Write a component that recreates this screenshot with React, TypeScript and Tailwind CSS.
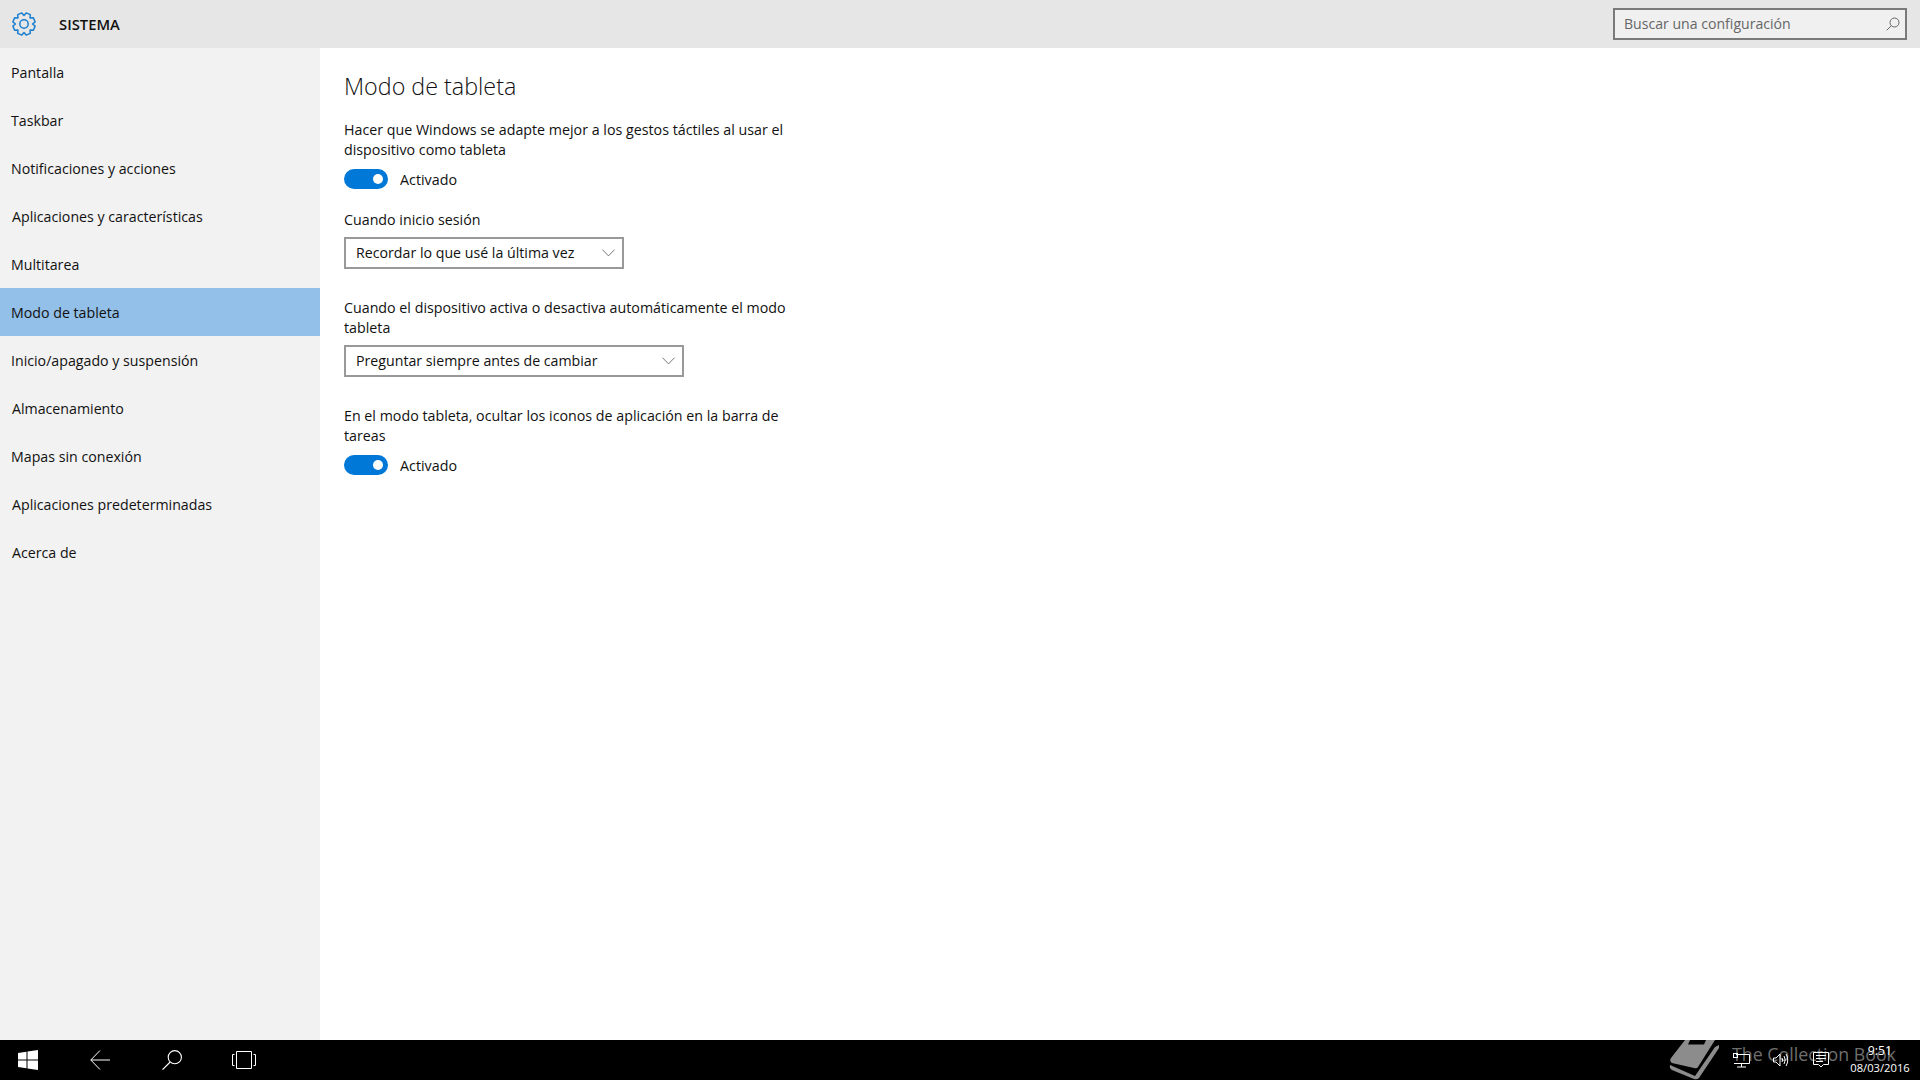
const FONT = "font-['Open_Sans','Noto_Sans',sans-serif]";

const NAV = [
  'Pantalla',
  'Taskbar',
  'Notificaciones y acciones',
  'Aplicaciones y características',
  'Multitarea',
  'Modo de tableta',
  'Inicio/apagado y suspensión',
  'Almacenamiento',
  'Mapas sin conexión',
  'Aplicaciones predeterminadas',
  'Acerca de',
];

// eight blunt teeth round a 24px box
function gearPath() {
  const pts: string[] = [];
  for (let i = 0; i < 8; i++) {
    const a = (i * Math.PI) / 4 + Math.PI / 8;
    const steps: [number, number][] = [
      [8.6, -0.39],
      [11.3, -0.2],
      [11.3, 0.2],
      [8.6, 0.39],
    ];
    for (const [r, d] of steps) {
      pts.push(`${(12 + r * Math.cos(a + d)).toFixed(2)} ${(12 + r * Math.sin(a + d)).toFixed(2)}`);
    }
  }
  return `M${pts.join('L')}Z`;
}

export default function App() {
  return (
    <div className={`flex h-[1080px] w-[1920px] flex-col overflow-hidden bg-white text-[14.2px] leading-5 text-[#111] ${FONT}`}>
      <header className="flex h-12 shrink-0 items-center bg-[#e6e6e6] pl-3 pr-[13px]">
        <svg width="24" height="24" viewBox="0 0 24 24" fill="none" stroke="#1a7fd0" strokeWidth="1.5" strokeLinejoin="round">
          <path d={gearPath()} />
          <circle cx="12" cy="12" r="4.2" />
        </svg>
        <span className="ml-[23px] text-[14.8px] font-semibold">SISTEMA</span>
        <div className="ml-auto flex h-8 w-[294px] items-center justify-between border-2 border-[#7a7a7a] bg-[#f0f0f0] pl-[9px] pr-[5px] text-[14.1px] text-[#666]">
          <span>Buscar una configuración</span>
          <svg width="14" height="14" viewBox="0 0 14 14" fill="none" stroke="#666" strokeWidth="1">
            <circle cx="8.5" cy="5.5" r="4.5" />
            <path d="M5.3 8.7 0.7 13.3" />
          </svg>
        </div>
      </header>

      <div className="flex min-h-0 flex-1">
        <nav className="w-80 shrink-0 bg-[#f2f2f2]">
          {NAV.map((item) => (
            <div
              key={item}
              className={`flex h-12 items-center pt-px ${item.startsWith('A') ? 'pl-3' : 'pl-[11px]'} ${item === 'Modo de tableta' ? 'bg-[#92c0e8]' : ''}`}
            >
              {item}
            </div>
          ))}
        </nav>

        <main className="flex-1 pl-6 pt-[22px]">
          <h1 className="text-[23.3px] font-light leading-8">Modo de tableta</h1>
          <p className="mt-[18px] w-[470px] text-[14.25px]">
            Hacer que Windows se adapte mejor a los gestos táctiles al usar el dispositivo como tableta
          </p>
          <Toggle />
          <p className="mt-[21px] text-[14.25px]">Cuando inicio sesión</p>
          <Combo width="w-[280px]" value="Recordar lo que usé la última vez" />
          <p className="mt-[29px] w-[470px] text-[14.25px]">
            Cuando el dispositivo activa o desactiva automáticamente el modo tableta
          </p>
          <Combo width="w-[340px]" value="Preguntar siempre antes de cambiar" />
          <p className="mt-[29px] w-[470px] text-[14.25px]">
            En el modo tableta, ocultar los iconos de aplicación en la barra de tareas
          </p>
          <Toggle />
        </main>
      </div>

      <Taskbar />
    </div>
  );
}

function Toggle() {
  return (
    <div className="mt-[9px] flex items-center gap-3">
      <div className="flex h-5 w-11 items-center justify-end rounded-full bg-[#0078d7] pr-[5px]">
        <div className="h-2.5 w-2.5 rounded-full bg-white" />
      </div>
      <span className="h-5 text-[14.3px] leading-[22px]">Activado</span>
    </div>
  );
}

function Combo({ width, value }: { width: string; value: string }) {
  return (
    <div className={`mt-[7px] flex h-8 items-center justify-between border-2 border-[#999] pl-2.5 pr-[7px] ${width}`}>
      <span>{value}</span>
      <svg width="13" height="8" viewBox="0 0 13 8" fill="none" stroke="#666" strokeWidth="0.9">
        <path d="M.4.6 6.5 6.9 12.6.6" />
      </svg>
    </div>
  );
}

function Taskbar() {
  return (
    <footer className="relative flex h-10 shrink-0 items-center bg-black pl-[18px] text-white">
      <svg width="20" height="20" viewBox="0 0 20 20" fill="white">
        <path d="M0 3 8.5 1.8V9.5H0ZM9.5 1.6 20 0V9.5H9.5ZM0 10.5H8.5V18.2L0 17ZM9.5 10.5H20V20L9.5 18.4Z" />
      </svg>
      <svg className="ml-[52px]" width="20" height="20" viewBox="0 0 20 20" fill="none" stroke="white" strokeWidth="1">
        <path d="M10 .5 .8 10 10 19.5M.8 10H20" />
      </svg>
      <svg className="ml-[52px]" width="20" height="20" viewBox="0 0 20 20" fill="none" stroke="white" strokeWidth="1.1">
        <circle cx="12.8" cy="7.2" r="6.6" />
        <path d="M8.2 12 .5 19.7" />
      </svg>
      <svg className="ml-[50px]" width="24" height="18" viewBox="0 0 24 18" fill="none" stroke="white" strokeWidth="1">
        <path d="M4.5.5H19.5V17.5H4.5ZM2.5 3.5H.5V14.5H2.5M21.5 3.5H23.5V14.5H21.5" />
      </svg>

      {/* watermark sits under the tray icons */}
      <svg className="absolute left-[1669px] top-0" width="52" height="40" viewBox="0 0 52 40" fill="#8c8c8c">
        <path d="M16 0H46L29 27Q28 29 25 28L3 23Q0 21 2 18Z" />
        <path d="M21 0H37L35 4.5H19Z" fill="#000" />
        <path d="M1 25 26 36 46 7 50 5 50 8 30 38Q28 40 25 39L3 30Q0 28 1 25Z" />
      </svg>
      <span className="absolute left-[1732px] top-[2px] whitespace-nowrap text-[17.8px] leading-6 text-[#6f6f6f]">
        The Collection Book
      </span>

      <div className="relative ml-auto flex items-center pr-[11px]">
        <svg width="17" height="15" viewBox="0 0 17 15" fill="none" stroke="white" strokeWidth="1">
          <path d="M3 1.5H16.5V10.5H1M8.5 10.5V14M4 14H13" />
          <rect x=".5" y=".5" width="4" height="4" />
        </svg>
        <svg className="ml-[23px]" width="16" height="14" viewBox="0 0 16 14" fill="none" stroke="white" strokeWidth="1">
          <path d="M.5 5V9H3L7 13V1L3 5Z" />
          <path d="M9 5Q10.5 7 9 9M11 3Q13.5 7 11 11M13 1Q16.5 7 13 13" />
        </svg>
        <svg className="ml-6" width="16" height="16" viewBox="0 0 16 16" fill="none" stroke="white" strokeWidth="1">
          <path d="M.5.5H15.5V12.5H10.5L8 15 5.5 12.5H.5ZM3 3.5H13M3 6.5H13M3 9.5H10" />
        </svg>
        <div className="ml-[22px] flex w-[58px] flex-col items-center pb-[3px] text-[11.2px] leading-[17px]">
          <span className="text-[12.3px]">9:51</span>
          <span>08/03/2016</span>
        </div>
      </div>
    </footer>
  );
}
